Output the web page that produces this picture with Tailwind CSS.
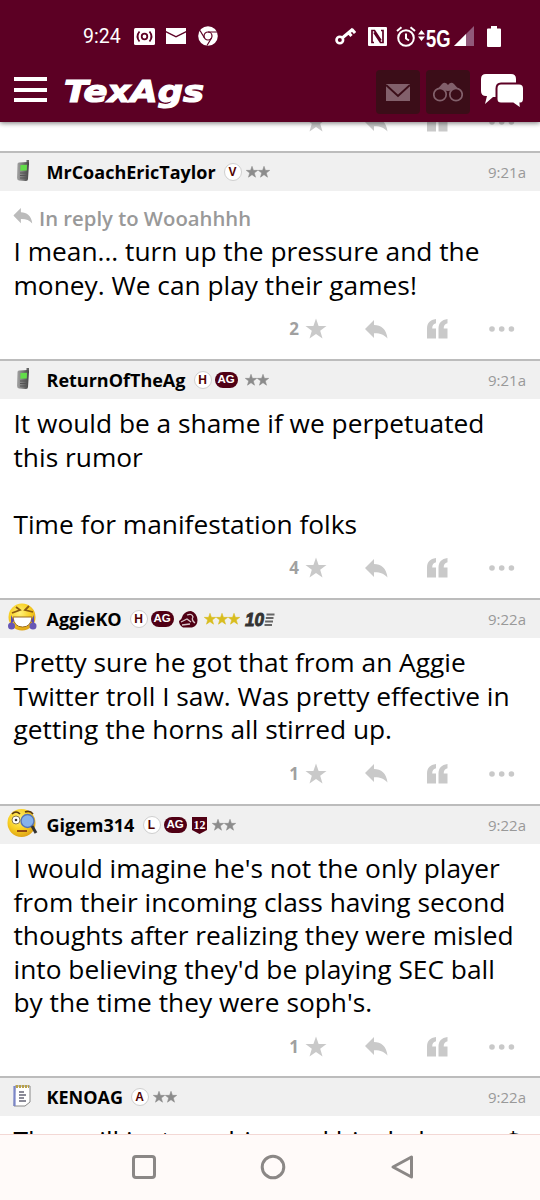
<!DOCTYPE html>
<html lang="en"><head><meta charset="utf-8"><title>TexAgs</title>
<script src="https://cdn.jsdelivr.net/npm/@tailwindcss/browser@4"></script></head>
<body class="w-[540px] h-[1200px] overflow-hidden bg-white text-black font-['Open_Sans','Noto_Sans',sans-serif]">
<svg class="absolute h-0 w-0">
<defs>
<linearGradient id="body" x1="0" x2="1"><stop offset="0" stop-color="#a5a5a5"/><stop offset=".5" stop-color="#777"/><stop offset="1" stop-color="#444"/></linearGradient>
<radialGradient id="face" cx=".42" cy=".35" r=".65"><stop offset="0" stop-color="#fff17a"/><stop offset=".6" stop-color="#f8cf22"/><stop offset="1" stop-color="#e0a516"/></radialGradient>
<symbol id="star" viewBox="0 0 22 22"><path d="M11 0.5 13.6 8H21.5L15.2 12.7 17.5 20.5 11 15.9 4.500 20.500 6.800 12.700 .5 8H8.400Z"/></symbol>
<symbol id="reply" viewBox="0 0 23 19"><path d="M0 9 9 0V5C16 5 21.500 9 22.500 18.500 19 14.500 15 13 9 13.200V18Z"/></symbol>
<symbol id="quote" viewBox="0 0 21 20"><path d="M0 19.500V9.500C0 4 3 .8 9 0V4.200C6.400 4.800 5.200 6.500 5.200 9.500H9V19.500ZM11.500 19.500V9.500C11.500 4 14.500 .8 20.500 0V4.200C17.900 4.800 16.700 6.500 16.700 9.500H20.500V19.500Z"/></symbol>
<symbol id="dots" viewBox="0 0 26 8"><circle cx="3" cy="4" r="2.800"/><circle cx="12.700" cy="4" r="2.800"/><circle cx="22.400" cy="4" r="2.800"/></symbol>
<symbol id="phone" viewBox="0 0 14 22"><path d="M10.500 0H13V5H10.500Z" fill="#666"/><path d="M3 2.500 12 2Q13 2 13 3.500L12 19Q12 21 10 21L3 20.500Q1 20 1 18L1.500 4Q1.500 2.500 3 2.500Z" fill="url(#body)"/><path d="M4.500 5 11 4.700 10.800 10.500 4.300 10.700Z" fill="#63dd4a"/><path d="M4 13H10.500M4 15.500H10.300M4 18H10" stroke="#555" stroke-width="1"/></symbol>
</defs></svg>
<div class="flex h-full flex-col">
<header class="relative z-10 h-[122px] shrink-0 bg-[#5c0024] shadow-[0_1px_5px_rgba(0,0,0,0.55)]">
 <div class="flex h-[72px] items-center pl-[83px] text-white">
  <span class="w-[51px] pt-[2px] font-[Roboto,sans-serif] text-[19.500px] leading-none">9:24</span>
  <svg class="mt-px h-[17px] w-[21px]" viewBox="0 0 21 17"><rect width="21" height="17" rx="1.500" fill="#fff"/><g fill="none" stroke="#5c0024" stroke-width="1.800"><circle cx="10.500" cy="8.500" r="2.800"/><path d="M5.500 3.500Q1.500 8.500 5.500 13.500M15.500 3.500Q19.500 8.500 15.500 13.500"/></g></svg>
  <svg class="ml-[11px] h-[16px] w-[20px]" viewBox="0 0 20 16" fill="#fff"><path d="M0 0H20V3L10 8 0 3Z"/><path d="M0 4.600 10 9.600 20 4.600V16H0Z"/></svg>
  <svg class="ml-[12px] h-[20px] w-[20px]" viewBox="0 0 20 20"><circle cx="10" cy="10" r="9.800" fill="#fff"/><g fill="none" stroke="#5c0024" stroke-width="1.200"><circle cx="10" cy="10" r="4"/><path d="M10 6H19M6.500 12 2 4.500M13.500 12 9 19.500"/></g></svg>
  <svg class="ml-[117px] h-[18px] w-[21px]" viewBox="0 0 21 18" fill="none" stroke="#fff"><circle cx="4.800" cy="13" r="3.300" stroke-width="2.600"/><path d="M7.200 11 18 2M13.500 5.500 16.500 9M17 2.500 20 6" stroke-width="3"/></svg>
  <svg class="ml-[12px] h-[19px] w-[19px]" viewBox="0 0 19 19"><rect width="19" height="19" rx="1" fill="#fff"/><path d="M6 15.500H4V3.500H6.500L13 13.500M13 3.500H15V15.500H12.500L6 5.500" fill="none" stroke="#5c0024" stroke-width="1.700"/></svg>
  <svg class="ml-[9px] h-[21px] w-[20px]" viewBox="0 0 20 21" fill="none" stroke="#fff" stroke-width="2"><circle cx="10" cy="12" r="7.800"/><path d="M10 7.500V12.500L13 14.500M1 5 5.500 1.200M19 5 14.500 1.200"/></svg>
  <svg class="ml-[2px] -mt-[2px] h-[11px] w-[7px]" viewBox="0 0 7 11" fill="#fff"><path d="M0 4.500H7L3.500 0ZM0 6.500H7L3.500 11Z"/></svg>
  <span class="ml-[1px] mt-[6px] w-[27px] origin-left scale-x-[0.8] whitespace-nowrap font-['Liberation_Sans',sans-serif] text-[23px] font-bold leading-none">5G</span>
  <svg class="ml-[1px] h-[20px] w-[20px]" viewBox="0 0 20 20"><path d="M20 0V20H0Z" fill="#91597a"/><path d="M12 8V20H0Z" fill="#fff"/></svg>
  <svg class="ml-[13px] h-[21px] w-[14px]" viewBox="0 0 14 21" fill="#fff"><path d="M4 0H10V2.500H13Q14 2.500 14 3.500V20Q14 21 13 21H1Q0 21 0 20V3.500Q0 2.500 1 2.500H4Z"/></svg>
 </div>
 <div class="flex h-[50px] items-start">
  <div class="ml-[14px] mt-[4px] flex h-[26px] w-[33px] flex-col justify-between pt-[1px]"><i class="h-[4px] bg-white"></i><i class="h-[4px] bg-white"></i><i class="h-[4px] bg-white"></i></div>
  <svg class="ml-[17px] mt-[2px] h-[38px] w-[142px] overflow-visible"><text x="0" y="27.500" textLength="140" lengthAdjust="spacingAndGlyphs" fill="#fff" stroke="#fff" stroke-width="1.200" font-family="DejaVu Sans" font-weight="bold" font-style="italic" font-size="30">TexAgs</text></svg>
  <div class="ml-[170px] mt-[-2px] flex h-[44px] w-[44px] items-center justify-center rounded bg-[#3b0d18]"><svg class="h-[17px] w-[24px]" viewBox="0 0 24 17"><rect width="24" height="17" fill="#82606b"/><path d="M0 1 12 12 24 1" fill="none" stroke="#3b0d18" stroke-width="2"/></svg></div>
  <div class="ml-[6px] mt-[-2px] flex h-[44px] w-[44px] items-center justify-center rounded bg-[#3b0d18]"><svg class="h-[20px] w-[30px]" viewBox="0 0 30 20"><path d="M1 11 9 2Q12-1 15 3 18-1 21 2L29 11 23 8 15 9 7 8Z" fill="#82606b"/><g fill="#3b0d18" stroke="#82606b" stroke-width="1.700"><circle cx="7" cy="12.500" r="6.200"/><circle cx="23" cy="12.500" r="6.200"/></g></svg></div>
  <svg class="ml-[11px] mt-[1px] h-[36px] w-[43px]" viewBox="0 0 43 36"><path fill="#fff" d="M5 1H30Q35 1 35 6V23Q35 24 30 24H12L4 31 6 23H5Q0 23 0 18V6Q0 1 5 1Z"/><path fill="#fff" stroke="#5c0024" stroke-width="2" d="M20 10.500H38Q43 10.500 43 15.500V25.500Q43 30.500 39.500 30.500L40 36 32 30.500H20Q15.500 30.500 15.500 26V15.500Q15.500 10.500 20 10.500Z"/></svg>
 </div>
</header>
<main id="feed" class="-mt-[12px] h-[1024px] overflow-hidden"></main>
<nav class="relative h-[66px] shrink-0 border-t border-[#f3d8d5] bg-[#fffaf9]">
 <svg class="block h-[65px] w-[540px]" viewBox="0 0 540 65" fill="none" stroke="#8b8786" stroke-width="3"><rect x="133.500" y="21.500" width="21" height="21" rx="2.500"/><circle cx="273" cy="32" r="10.800"/><path d="M411.500 22V42L393 32Z" stroke-linejoin="round"/></svg>
</nav>
</div>
<script>
const actions = n => `<div class="flex h-[54px] items-center text-[#c9c9c9]">
 <span class="w-[299px] text-right text-[17px] font-bold text-[#a0a0a0]">${n}</span>
 <svg class="ml-[6px] h-[22px] w-[22px]" fill="currentColor"><use href="#star"/></svg>
 <svg class="ml-[38px] h-[19px] w-[23px]" fill="currentColor"><use href="#reply"/></svg>
 <svg class="ml-[39px] h-[20px] w-[21px]" fill="currentColor"><use href="#quote"/></svg>
 <svg class="ml-[41px] h-[8px] w-[26px]" fill="currentColor"><use href="#dots"/></svg></div>`;
const letter = l => `<span class="flex h-[18px] w-[18px] shrink-0 items-center justify-center rounded-full border border-[#cfcfcf] bg-white font-['Liberation_Sans',sans-serif] text-[12px] font-bold text-[#500000]">${l}</span>`;
const ag = `<span class="ml-[3px] flex h-[16px] w-[23px] items-center justify-center rounded-full bg-[#500014] font-['Liberation_Sans',sans-serif] text-[11.500px] font-bold text-white">AG</span>`;
const stars = (n, c, m) => `<span class="${m} flex ${c}">${'<svg class="h-[12px] w-[12px]" fill="currentColor" stroke="currentColor" stroke-width="1"><use href="#star"/></svg>'.repeat(n)}</span>`;
const phone = `<svg class="ml-[16px] -mt-[3px] h-[22px] w-[14px]"><use href="#phone"/></svg>`;
const laugh = `<svg class="ml-[7px] -mt-[4px] h-[29px] w-[31px]" viewBox="0 0 31 29"><circle cx="15" cy="14" r="13.500" fill="url(#face)"/><path d="M5 10 13 7 9 4M26 9 18 7 22 3" fill="none" stroke="#8a5a10" stroke-width="1.800"/><path d="M6 14H25Q24 24 15.500 24T6 14Z" fill="#fff" stroke="#9a6a20"/><path d="M4 12 7 18 4 21ZM27 12 24 18 27 22Z" fill="#5a4ab0"/><circle cx="4.500" cy="23" r="3.500" fill="#6657b5"/><circle cx="26" cy="23" r="3.500" fill="#6657b5"/></svg>`;
const inspect = `<svg class="ml-[7px] -mt-[5px] h-[30px] w-[31px]" viewBox="0 0 31 30"><circle cx="14.500" cy="15" r="14" fill="url(#face)"/><path d="M5 6Q9 2 13 6M18 4Q23 2 26 6" fill="none" stroke="#5b3a10" stroke-width="1.600"/><circle cx="9" cy="12" r="4" fill="#fff" stroke="#8a7a50"/><circle cx="9" cy="12" r="1.300" fill="#333"/><path d="M10 23H20" stroke="#8a3b10" stroke-width="1.800"/><circle cx="20.500" cy="13" r="6.500" fill="#86b2ec" stroke="#5573b5" stroke-width="1.400"/><path d="M25 18 29 25" stroke="#333" stroke-width="3"/></svg>`;
const note = `<svg class="ml-[13px] -mt-[3px] h-[23px] w-[18px]" viewBox="0 0 18 23"><path d="M2 2H17V18L12 22 1 22Z" fill="#fff" stroke="#888"/><path d="M1.500 2V22" stroke="#7b86c8" stroke-width="2.200"/><path d="M3 2.500H16" stroke="#b9a24a" stroke-width="3" stroke-dasharray="2 1"/><path d="M6 8H11M6 11H13M6 14H11M6 17H13" stroke="#667" stroke-width="1.300"/></svg>`;
const horse = `<svg class="ml-[5px] h-[17px] w-[19px]" viewBox="0 0 19 17"><path d="M0 10Q3 8 4 4 7 0 12 0 18 2 18.500 9 18.500 15 13 16.500L4 16.500Q0 14 0 10Z" fill="#500014"/><path d="M8 4Q13 2 14 6 12 9 16 12M2 11 8 8 12 11M3 14 11 13" fill="none" stroke="#d8c5ca" stroke-width="1.300"/></svg>`;
const ten = `<svg class="ml-[5px] h-[15px] w-[30px] overflow-visible" viewBox="0 0 30 15"><text x="0" y="14" textLength="19" lengthAdjust="spacingAndGlyphs" font-family="Liberation Sans" font-weight="bold" font-style="italic" font-size="18" fill="#333" stroke="#333" stroke-width=".9">10</text><path d="M21.500 2.500H29.500M20.800 6H28.500M20.100 9.500H28M19.500 13H27" stroke="#666" stroke-width="2.200"/></svg>`;
const shield = `<svg class="ml-[5px] h-[17px] w-[15px]" viewBox="0 0 15 17"><path d="M0 0H15V13L7.500 17 0 13Z" fill="#500014"/><text x="1.500" y="12" textLength="12" lengthAdjust="spacingAndGlyphs" font-family="Liberation Serif" font-weight="bold" font-size="13" fill="#fff">12</text></svg>`;
const posts = [
 {icon: phone, name: 'MrCoachEricTaylor', w: 'w-[169px]', b: letter('V') + stars(2, 'text-[#8c8c8c]', 'ml-[4px]'), t: '9:21a', re: 'Wooahhhh', body: ['I mean... turn up the pressure and the', 'money. We can play their games!'], n: 2, h: 'h-[208px]'},
 {icon: phone, name: 'ReturnOfTheAg', w: 'w-[139px]', b: letter('H') + ag + stars(2, 'text-[#8c8c8c]', 'ml-[7px]'), t: '9:21a', body: ['It would be a shame if we perpetuated', 'this rumor', '&nbsp;', 'Time for manifestation folks'], n: 4, h: 'h-[239px]'},
 {icon: laugh, name: 'AggieKO', w: 'w-[75px]', b: letter('H') + ag + horse + stars(3, 'text-[#d9bd1e]', 'ml-[6px]') + ten, t: '9:22a', body: ['Pretty sure he got that from an Aggie', 'Twitter troll I saw. Was pretty effective in', 'getting the horns all stirred up.'], n: 1, h: 'h-[206px]'},
 {icon: inspect, name: 'Gigem314', w: 'w-[88px]', b: letter('L') + ag + shield + stars(2, 'text-[#8c8c8c]', 'ml-[5px]'), t: '9:22a', body: ["I would imagine he's not the only player", 'from their incoming class having second', 'thoughts after realizing they were misled', "into believing they'd be playing SEC ball", "by the time they were soph's."], n: 1, h: 'h-[272px]'},
 {icon: note, name: 'KENOAG', w: 'w-[76px]', b: letter('A') + stars(2, 'text-[#8c8c8c]', 'ml-[4px]'), t: '9:22a', body: ['They will just pay him and his dad some $'], n: 1, h: 'h-[208px]'}];
document.getElementById('feed').innerHTML = `<div class="-mt-[15px] h-[56px]">${actions('')}</div>` + posts.map(p => `<article class="${p.h}">
 <div class="flex h-[40px] items-center border-t-2 border-[#bcbcbc] bg-[#f0f0f0] pr-[14px]">
  <div class="w-[46.500px] shrink-0">${p.icon}</div>
  <span class="${p.w} mr-[8px] whitespace-nowrap text-[18px] font-bold">${p.name}</span>${p.b}
  <span class="ml-auto text-[15px] text-[#999]">${p.t}</span></div>
 ${p.re ? `<div class="flex h-[36px] items-center pl-[13px] pt-[18px] text-[20.300px] font-semibold text-[#999]"><svg class="mr-[6px] -mt-[5px] h-[16px] w-[20px] text-[#bbb]" viewBox="0 0 23 19" fill="currentColor"><use href="#reply"/></svg>In reply to ${p.re}</div>` : ''}
 <div class="${p.re ? 'pt-[8px]' : 'pt-[8px]'} whitespace-nowrap pl-[13.500px] text-[26.300px] leading-[33.500px]">${p.body.map(l => `<p>${l}</p>`).join('')}</div>
 ${actions(p.n)}</article>`).join('');
</script>
</body></html>
